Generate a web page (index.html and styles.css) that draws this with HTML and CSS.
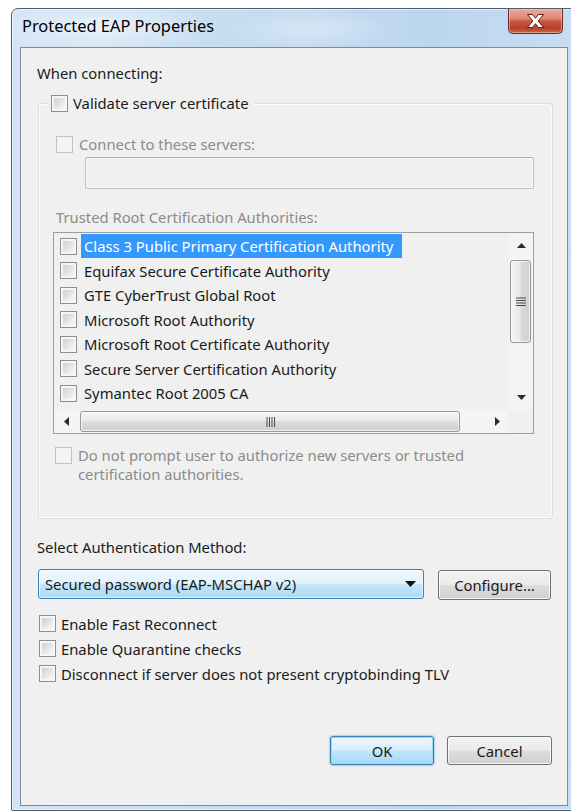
FILE: index.html
```html
<!DOCTYPE html>
<html lang="en">
<head>
<meta charset="utf-8">
<title>Protected EAP Properties</title>
<link rel="stylesheet" href="styles.css">
</head>
<body>
<div class="window">
  <div class="titlebar">
    <span class="title">Protected EAP Properties</span>
    <button class="close-btn" aria-label="Close">
      <svg width="17" height="14" viewBox="0 0 17 14"><polygon points="0.5,0.5 5.5,0.5 8.5,4.3 11.5,0.5 16.5,0.5 11.2,7 16.5,13.5 11.5,13.5 8.5,9.7 5.5,13.5 0.5,13.5 5.8,7" fill="#fff" stroke="#5a2219" stroke-width="1" stroke-linejoin="round"/></svg>
    </button>
  </div>

  <div class="client">
    <div class="label when">When connecting:</div>

    <div class="group">
      <div class="group-title">
        <span class="check"><span class="box"></span><span>Validate server certificate</span></span>
      </div>

      <div class="check disabled connect"><span class="box"></span><span>Connect to these servers:</span></div>
      <div class="textfield"></div>

      <div class="label disabled trusted">Trusted Root Certification Authorities:</div>

      <div class="listbox">
        <div class="list-items">
          <div class="item selected"><span class="box"></span><span class="item-text">Class 3 Public Primary Certification Authority</span></div>
          <div class="item"><span class="box"></span><span class="item-text">Equifax Secure Certificate Authority</span></div>
          <div class="item"><span class="box"></span><span class="item-text">GTE CyberTrust Global Root</span></div>
          <div class="item"><span class="box"></span><span class="item-text">Microsoft Root Authority</span></div>
          <div class="item"><span class="box"></span><span class="item-text">Microsoft Root Certificate Authority</span></div>
          <div class="item"><span class="box"></span><span class="item-text">Secure Server Certification Authority</span></div>
          <div class="item"><span class="box"></span><span class="item-text">Symantec Root 2005 CA</span></div>
        </div>

        <div class="vscroll">
          <div class="sb-btn"><svg width="9" height="5" viewBox="0 0 9 5"><polygon points="4.5,0 9,5 0,5" fill="#2b2b2b"/></svg></div>
          <div class="sb-track v">
            <div class="thumb v">
              <svg width="10" height="9" viewBox="0 0 10 9"><path d="M0 1H10M0 3.5H10M0 6H10M0 8.5H10" stroke="#4a4a4a" stroke-width="1"/></svg>
            </div>
          </div>
          <div class="sb-btn down"><svg width="9" height="5" viewBox="0 0 9 5"><polygon points="0,0 9,0 4.5,5" fill="#2b2b2b"/></svg></div>
        </div>

        <div class="hscroll">
          <div class="sb-btn"><svg width="5" height="9" viewBox="0 0 5 9"><polygon points="0,4.5 5,0 5,9" fill="#2b2b2b"/></svg></div>
          <div class="sb-track h">
            <div class="thumb h">
              <svg width="9" height="10" viewBox="0 0 9 10"><path d="M1 0V10M3.5 0V10M6 0V10M8.5 0V10" stroke="#4a4a4a" stroke-width="1"/></svg>
            </div>
          </div>
          <div class="sb-btn"><svg width="5" height="9" viewBox="0 0 5 9"><polygon points="0,0 5,4.5 0,9" fill="#2b2b2b"/></svg></div>
        </div>
        <div class="sb-corner"></div>
      </div>

      <div class="check disabled multiline prompt"><span class="box"></span><span>Do not prompt user to authorize new servers or trusted<br>certification authorities.</span></div>
    </div>

    <div class="label method">Select Authentication Method:</div>
    <div class="method-row">
      <div class="combo">
        <span>Secured password (EAP-MSCHAP v2)</span>
        <svg width="11" height="6" viewBox="0 0 11 6"><polygon points="0,0 11,0 5.5,6" fill="#111"/></svg>
      </div>
      <button class="btn configure">Configure...</button>
    </div>

    <div class="options">
      <div class="check"><span class="box"></span><span>Enable Fast Reconnect</span></div>
      <div class="check"><span class="box"></span><span>Enable Quarantine checks</span></div>
      <div class="check"><span class="box"></span><span>Disconnect if server does not present cryptobinding TLV</span></div>
    </div>

    <div class="footer">
      <button class="btn default">OK</button>
      <button class="btn">Cancel</button>
    </div>
  </div>
</div>
</body>
</html>
```
FILE: styles.css
```css
* { box-sizing: border-box; }

html, body {
  margin: 0;
  padding: 0;
}

body {
  width: 571px;
  height: 811px;
  overflow: hidden;
  background: #ffffff;
  font-family: "Noto Sans", "Open Sans", sans-serif;
  font-size: 14.8px;
  color: #1a1a1a;
}

/* ---------- window frame ---------- */
.window {
  margin: 8px 0 0 11px;
  width: 566px;
  height: 803px;
  border: 1px solid #4e5c6b;
  border-radius: 7px 7px 2px 2px;
  padding: 0 8px 4px 8px;
  display: flex;
  flex-direction: column;
  background:
    radial-gradient(ellipse 160px 40px at 90px 18px, rgba(255,255,255,0.55), rgba(255,255,255,0) 70%),
    radial-gradient(ellipse 120px 30px at 300px 20px, rgba(255,255,255,0.35), rgba(255,255,255,0) 70%),
    linear-gradient(to right, #d3e4f4 0%, #c4dbf1 45%, #bcd6ef 75%, #c7ddf2 100%);
  box-shadow: inset 0 0 0 1px rgba(255,255,255,0.55);
}

.titlebar {
  height: 38px;
  flex: none;
  display: flex;
  justify-content: space-between;
  align-items: flex-start;
}

.title {
  margin: 7px 0 0 2px;
  line-height: 20px;
  font-size: 16.4px;
  color: #000;
}

.close-btn {
  width: 55px;
  height: 25px;
  margin: 0 5px 0 0;
  padding: 0;
  border: 1px solid #6c2b22;
  border-top: none;
  border-radius: 0 0 5px 5px;
  background: linear-gradient(#e9a99a 0%, #dc8a76 40%, #c75a42 50%, #b8402a 80%, #c9684f 100%);
  box-shadow: inset 0 0 0 1px rgba(255,220,210,0.45);
  display: flex;
  align-items: center;
  justify-content: center;
}

/* ---------- client area ---------- */
.client {
  flex: 1;
  background: #f0f0f0;
  border: 1px solid #7d8c9b;
  padding-left: 16px;
  display: flex;
  flex-direction: column;
  align-items: flex-start;
}

.label {
  line-height: 20px;
  height: 20px;
  white-space: nowrap;
}

.disabled { color: #8b8b8b; }

.when { margin-top: 15px; }

/* ---------- checkboxes ---------- */
.check {
  display: flex;
  align-items: center;
  height: 20px;
  line-height: 20px;
  white-space: nowrap;
}

.box {
  flex: none;
  width: 17px;
  height: 17px;
  margin-right: 5px;
  border: 1px solid #8e8f8f;
  padding: 2px;
  background:
    linear-gradient(135deg, #cfd0d2 0%, #e6e6e6 55%, #f9f9f9 100%) content-box,
    #f6f6f6;
}

.disabled .box {
  border-color: #c2c2c2;
  background: #f3f3f3;
}

.check.multiline {
  align-items: flex-start;
  height: auto;
  line-height: 19px;
  white-space: nowrap;
}
.check.multiline .box { margin-top: 1px; }

/* ---------- group box ---------- */
.group {
  margin: 20px 0 0 1px;
  width: 515px;
  border: 1px solid #d9dfe3;
  border-radius: 3px;
  box-shadow: inset 0 0 0 1px #fbfbfb;
  padding-bottom: 34px;
  display: flex;
  flex-direction: column;
  align-items: flex-start;
}

.group-title {
  margin: -11px 0 0 9px;
  padding: 0 5px 0 3px;
  height: 20px;
  background: #f0f0f0;
}

.connect { margin: 21px 0 0 17px; }
.connect .box { margin-right: 6px; }

.textfield {
  margin: 3px 0 0 46px;
  width: 449px;
  height: 32px;
  border: 1px solid #bfbfbf;
  border-top-color: #acacac;
  border-radius: 2px;
  background: #f0f0f0;
  box-shadow: inset 0 0 0 1px #f7f7f7;
}

.trusted { margin: 18px 0 0 17px; }

.prompt { margin: 12px 0 0 16px; }
.prompt .box { margin-right: 6px; }

/* ---------- list box ---------- */
.listbox {
  margin: 5px 0 0 14px;
  width: 481px;
  height: 202px;
  border: 1px solid #9b9fa3;
  background: #f0f0f0;
  display: grid;
  grid-template-columns: 1fr 24px;
  grid-template-rows: 1fr 23px;
}

.list-items {
  padding-top: 1px;
  overflow: hidden;
}

.item {
  height: 24.5px;
  display: flex;
  align-items: center;
  padding-left: 6px;
  white-space: nowrap;
}

.item .box { margin-right: 4px; }

.item-text {
  padding: 0 4px 0 3px;
  line-height: 24px;
  color: #1a1a1a;
}

.item.selected .item-text {
  background: #3399ff;
  color: #ffffff;
  padding-right: 9px;
}

/* ---------- scroll bars ---------- */
.vscroll {
  display: flex;
  flex-direction: column;
  background: #f4f4f4;
}

.hscroll {
  display: flex;
  background: #f4f4f4;
}

.sb-corner { background: #f0f0f0; }

.sb-btn {
  flex: none;
  width: 24px;
  height: 24px;
  display: flex;
  align-items: center;
  justify-content: center;
}
.hscroll .sb-btn { height: 23px; }
.vscroll .sb-btn.down { height: 26px; }

.sb-track {
  flex: 1;
  display: flex;
}
.sb-track.v { flex-direction: column; }

.thumb {
  border: 1px solid #959595;
  border-radius: 3px;
  display: flex;
  align-items: center;
  justify-content: center;
  box-shadow: inset 0 0 0 1px rgba(255,255,255,0.7);
}

.thumb.v {
  margin: 3px 2px 0 1px;
  height: 83px;
  background: linear-gradient(to right, #f5f5f5 0%, #e9e9e9 45%, #d9d9d9 55%, #cfcfcf 100%);
}

.thumb.h {
  margin: 1px 0 1px 2px;
  width: 380px;
  background: linear-gradient(#f5f5f5 0%, #e9e9e9 45%, #d9d9d9 55%, #cfcfcf 100%);
}

/* ---------- method selection ---------- */
.method { margin-top: 18px; }

.method-row {
  margin: 12px 0 0 1px;
  display: flex;
  align-items: flex-start;
}

.combo {
  width: 386px;
  height: 30px;
  border: 1px solid #3c7fb1;
  border-radius: 3px;
  padding: 0 7px 0 6px;
  display: flex;
  align-items: center;
  justify-content: space-between;
  background: linear-gradient(#ecf7fd 0%, #e2f2fc 50%, #c5e6f9 52%, #abd9f6 100%);
  box-shadow: inset 0 0 0 1px rgba(255,255,255,0.6);
  white-space: nowrap;
}

.btn {
  height: 30px;
  border: 1px solid #707070;
  border-radius: 3px;
  padding: 0;
  font: inherit;
  color: #1a1a1a;
  background: linear-gradient(#f2f2f2 0%, #ebebeb 48%, #dddddd 52%, #cfcfcf 100%);
  box-shadow: inset 0 0 0 1px rgba(255,255,255,0.75);
}

.configure {
  width: 113px;
  margin: 1px 0 0 14px;
}

/* ---------- option checkboxes ---------- */
.options {
  margin: 11px 0 0 2px;
  display: flex;
  flex-direction: column;
}
.options .check { height: 25px; }

/* ---------- dialog buttons ---------- */
.footer {
  margin-top: 50px;
  align-self: stretch;
  display: flex;
  justify-content: flex-end;
  gap: 13px;
  padding-right: 15px;
}

.footer .btn {
  width: 105px;
  height: 29px;
}

.btn.default {
  width: 104px;
  border-color: #3c7fb1;
  background: linear-gradient(#eaf6fd 0%, #d9f0fc 48%, #bee6fd 52%, #a7d9f5 100%);
  box-shadow: inset 0 0 0 1px #9fd6f6, 0 0 1px 1px rgba(90,170,230,0.45);
}
```
